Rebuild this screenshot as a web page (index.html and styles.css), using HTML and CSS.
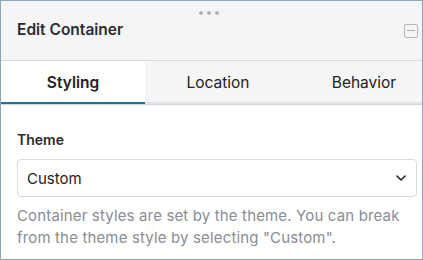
FILE: index.html
```html
<!DOCTYPE html>
<html>
<head>
<meta charset="utf-8">
<link rel="stylesheet" href="styles.css">
</head>
<body>
<div class="panel">
  <div class="header">
    <div class="grip"><span></span><span></span><span></span></div>
    <div class="title">Edit Container</div>
    <div class="minimize"><span></span></div>
  </div>
  <div class="tabs">
    <div class="tab active">Styling</div>
    <div class="tab">Location</div>
    <div class="tab">Behavior</div>
  </div>
  <div class="content">
    <div class="label">Theme</div>
    <div class="select">
      <span>Custom</span>
      <svg class="chevron" width="10" height="6" viewBox="0 0 10 6"><path d="M1 1l4 4 4-4" fill="none" stroke="#222" stroke-width="1.6" stroke-linecap="round" stroke-linejoin="round"/></svg>
    </div>
    <p class="help">Container styles are set by the theme. You can break from the theme style by selecting "Custom".</p>
  </div>
</div>
</body>
</html>
```
FILE: styles.css
```css
html, body {
  margin: 0;
  padding: 0;
  background: #fff;
}
body {
  font-family: Inter, "Noto Sans", sans-serif;
  color: #222;
}
.panel {
  width: 423px;
  height: 260px;
  box-sizing: border-box;
  border: 1px solid #87a9b9;
  overflow: hidden;
  background: #fff;
}
.header {
  position: relative;
  height: 59px;
  background: #f5f5f6;
  border-bottom: 1px solid #d8d9df;
  display: flex;
  align-items: center;
  padding: 0 4px 0 16px;
}
.grip {
  position: absolute;
  top: 10px;
  left: 198px;
  display: flex;
  gap: 4px;
}
.grip span {
  width: 4px;
  height: 4px;
  border-radius: 50%;
  background: #b3b5bb;
}
.title {
  flex: 1;
  font-size: 15.5px;
  font-weight: 600;
  color: #2b2c30;
  padding-bottom: 3px;
}
.minimize {
  width: 12px;
  height: 12px;
  border: 1px solid #b7b7b9;
  border-radius: 2px;
  display: flex;
  align-items: center;
  justify-content: center;
}
.minimize span {
  width: 8px;
  height: 1px;
  background: #b0b0b2;
}
.tabs {
  display: flex;
  height: 43px;
  background: #f5f5f6;
  border-bottom: 1px solid #d3d5dd;
}
.tab {
  flex: 0 0 146px;
  display: flex;
  align-items: center;
  justify-content: center;
  padding-top: 2px;
  font-size: 15.5px;
  color: #222;
  box-sizing: border-box;
  border-bottom: 2px solid #e2e3e8;
}
.tab.active {
  flex-basis: 144px;
  background: #fff;
  font-weight: 600;
  border-bottom-color: #177888;
}
.content {
  padding: 25px 5px 0 16px;
}
.label {
  font-size: 14px;
  font-weight: 600;
  color: #2b2c30;
  line-height: 20px;
}
.select {
  margin-top: 9px;
  height: 38px;
  box-sizing: border-box;
  border: 1px solid #d9dade;
  border-radius: 4px;
  display: flex;
  align-items: center;
  justify-content: space-between;
  padding: 0 10px 0 9px;
  font-size: 15px;
  color: #222;
}
.help {
  margin: 8px 0 0;
  font-size: 15px;
  letter-spacing: 0.15px;
  line-height: 22px;
  color: #8a8d94;
}
```
